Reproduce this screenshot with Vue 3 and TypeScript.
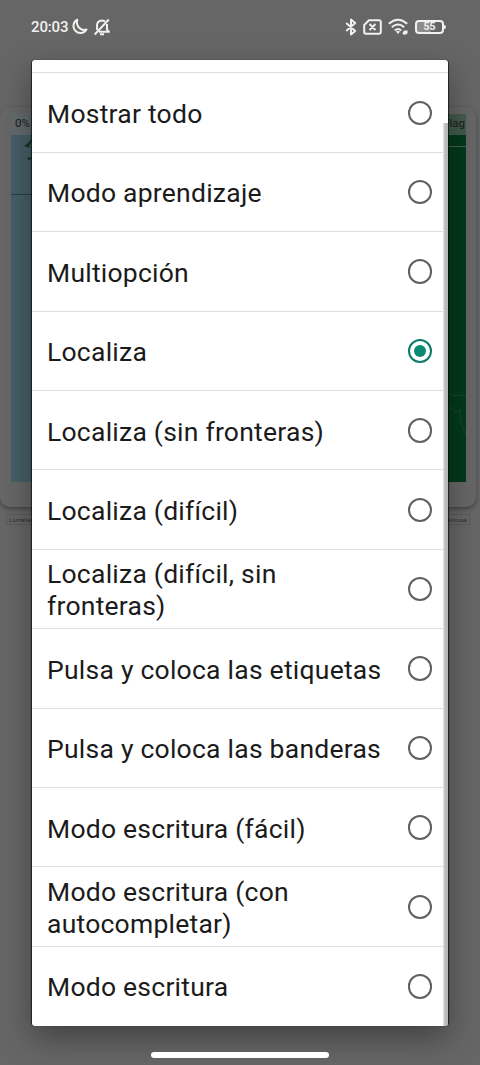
<script setup lang="ts">
import { ref } from 'vue'

const modes: string[] = [
  'Mostrar todo',
  'Modo aprendizaje',
  'Multiopción',
  'Localiza',
  'Localiza (sin fronteras)',
  'Localiza (difícil)',
  'Localiza (difícil, sin fronteras)',
  'Pulsa y coloca las etiquetas',
  'Pulsa y coloca las banderas',
  'Modo escritura (fácil)',
  'Modo escritura (con autocompletar)',
  'Modo escritura',
]
const selected = ref('Localiza')
</script>

<template>
  <div class="screen">
    <div class="game">
      <div class="map">
        <div class="bar"><span>0%</span><span>Flag</span></div>
        <svg class="terrain" width="456" height="347" viewBox="0 0 456 347">
          <rect width="456" height="347" fill="#465f67" />
          <path d="M0 59.500H25" stroke="#263e45" />
          <path d="M18 7l2-3v4l-2 3 2 2-4-1-3-1 3-2zM16 23l3-1 2 2-3 1z" fill="#0b3a20" />
          <rect x="430" width="26" height="347" fill="#04391c" />
          <path d="M430 11.500H456" stroke="#48604f" />
          <path d="M435 257l8 4 8-1 5 2M438 270l6 7 5-2 1 13 5 12" fill="none" stroke="#1c4a2f" stroke-width=".8" />
        </svg>
      </div>
    </div>
    <div class="caption"><span>Lorrielieg</span><span>Version 5 de Ancuse</span></div>

    <header class="status">
      <span class="clock">20:03</span>
      <svg class="moon" width="17" height="18" viewBox="0 0 17 18">
        <path d="M6.300 1.700A7 7 0 1 0 15.500 11.500C10 13.500 4.500 8 6.300 1.700Z" />
      </svg>
      <svg class="bell" width="18" height="18" viewBox="0 0 18 18">
        <path d="M4 12V7.500C4 4.300 6 2.700 9 2.500c1.300 0 2.200.3 3 .9M14 6v5.500l2 2.300H6M1.700 16.500L15.800 1.500M7 16.300h4" />
      </svg>
      <span class="space"></span>
      <svg class="bt" width="12" height="18" viewBox="0 0 12 18">
        <path d="M1.200 5l9 8L6 16.500V1.500L10.200 5l-9 8" />
      </svg>
      <svg class="sim" width="19" height="16" viewBox="0 0 19 16">
        <path d="M6 1.200h10a1.800 1.800 0 0 1 1.800 1.800v10A1.800 1.800 0 0 1 16 14.800H3A1.800 1.800 0 0 1 1.200 13V6zM6.500 5L12.500 11M12.500 5L6.500 11" />
      </svg>
      <svg class="wifi" width="21" height="17" viewBox="0 0 21 17">
        <path d="M.8 5.700Q10 -2.200 19.200 5.700M3.800 9.200Q10 3.800 16.200 9.200M6.800 12.400Q10 9.600 13.200 12.400" />
        <path class="fill" d="M8 13.500q2-1.400 4 0l-2 2.500zM14.800 14l1.800-1.500h3v2.500l-1.500 1.500h-3.300z" />
      </svg>
      <span class="battery"><b>55</b></span>
    </header>

    <main class="dialog" role="radiogroup">
      <div
        v-for="mode in modes"
        :key="mode"
        class="row"
        role="radio"
        :aria-checked="mode === selected"
        @click="selected = mode"
      >
        <span class="label">{{ mode }}</span>
        <span class="radio" :class="{ on: mode === selected }"></span>
      </div>
      <i class="scrollbar"></i>
    </main>
    <div class="homebar"></div>
  </div>
</template>

<style>
body {
  margin: 0;
  overflow: hidden;
}
</style>

<style scoped>
.screen {
  position: relative;
  width: 480px;
  height: 1065px;
  overflow: hidden;
  box-sizing: border-box;
  padding-top: 107px;
  background: #666;
  font-family: Roboto, "Liberation Sans", sans-serif;
}
.game {
  box-sizing: border-box;
  width: 476px;
  height: 400px;
  padding: 7px 10px 0 11px;
  border-radius: 10px;
  background: #676767;
  box-shadow: 0 2px 4px #444;
}
.map {
  width: 455px;
  height: 368px;
  overflow: hidden;
}
.bar {
  display: flex;
  justify-content: space-between;
  height: 21px;
  padding: 0 1px 0 4px;
  background: linear-gradient(90deg, #636b6c 50%, #435b4d 50%);
  color: #17201e;
  font-size: 11.500px;
  line-height: 19px;
}
.terrain {
  display: block;
}
.caption {
  display: flex;
  justify-content: space-between;
  margin: 7px 10px 0 6px;
  padding: 0 2px;
  height: 9px;
  border: 1px solid #5a5a5a;
  color: #303030;
  font-size: 6px;
  line-height: 9px;
}
.status {
  position: absolute;
  top: 0;
  left: 0;
  display: flex;
  align-items: center;
  box-sizing: border-box;
  width: 480px;
  height: 53px;
  padding: 0 34px 0 31px;
  color: #f0f0f0;
}
.clock {
  width: 40px;
  font-size: 15px;
  font-weight: 500;
  letter-spacing: -0.150px;
}
.status svg {
  flex: none;
  fill: none;
  stroke: #f0f0f0;
  stroke-width: 2;
  stroke-linejoin: round;
}
.status svg .fill {
  fill: #f0f0f0;
  stroke: none;
}
.bell {
  margin-left: 5px;
}
.space {
  flex: 1;
}
.sim {
  margin-left: 6px;
}
.wifi {
  margin-left: 6px;
}
.battery {
  position: relative;
  display: flex;
  align-items: center;
  justify-content: center;
  box-sizing: border-box;
  width: 29px;
  height: 14px;
  margin: 0 2px 0 6px;
  border: 2px solid #f0f0f0;
  border-radius: 4px;
  background: linear-gradient(90deg, #8c8c8c 55%, #666 55%);
  font-size: 10.500px;
  line-height: 10px;
}
.battery::after {
  content: "";
  position: absolute;
  right: -4px;
  top: 3px;
  width: 2px;
  height: 4px;
  border-radius: 0 2px 2px 0;
  background: #f0f0f0;
}
.dialog {
  position: absolute;
  top: 60px;
  left: 32px;
  box-sizing: border-box;
  width: 416px;
  height: 965.500px;
  padding-top: 12.400px;
  border-radius: 3px;
  overflow: hidden;
  background: #fff;
}
.screen::before {
  content: "";
  position: absolute;
  top: 61px;
  left: 32px;
  width: 416px;
  height: 964px;
  border-radius: 3px;
  box-shadow: 0 0 1px 1px rgba(0, 0, 0, 0.650), 0 12px 32px rgba(0, 0, 0, 0.380);
}
.row {
  display: flex;
  align-items: center;
  justify-content: space-between;
  box-sizing: border-box;
  height: 79.420px;
  padding: 2.800px 16px 0 15px;
  border-top: 1.500px solid #dedede;
}
.label {
  max-width: 345px;
  color: #1b1b1b;
  font-size: 26.500px;
  letter-spacing: 0.240px;
  line-height: 32px;
}
.radio {
  flex: none;
  display: flex;
  align-items: center;
  justify-content: center;
  box-sizing: border-box;
  width: 24.500px;
  height: 24.500px;
  margin-top: -2.400px;
  border: 2px solid #606060;
  border-radius: 50%;
}
.radio.on {
  border-color: #0a7c68;
}
.radio.on::after {
  content: "";
  width: 12.500px;
  height: 12.500px;
  border-radius: 50%;
  background: #0a8a73;
}
.scrollbar {
  position: absolute;
  top: 63px;
  right: 0;
  bottom: 0;
  width: 5px;
  background: linear-gradient(90deg, #dcdcdc 1px, #b9b9b9 2px);
}
.homebar {
  position: absolute;
  left: 151px;
  top: 1052px;
  width: 178px;
  height: 6px;
  border-radius: 3px;
  background: #fff;
}
</style>
